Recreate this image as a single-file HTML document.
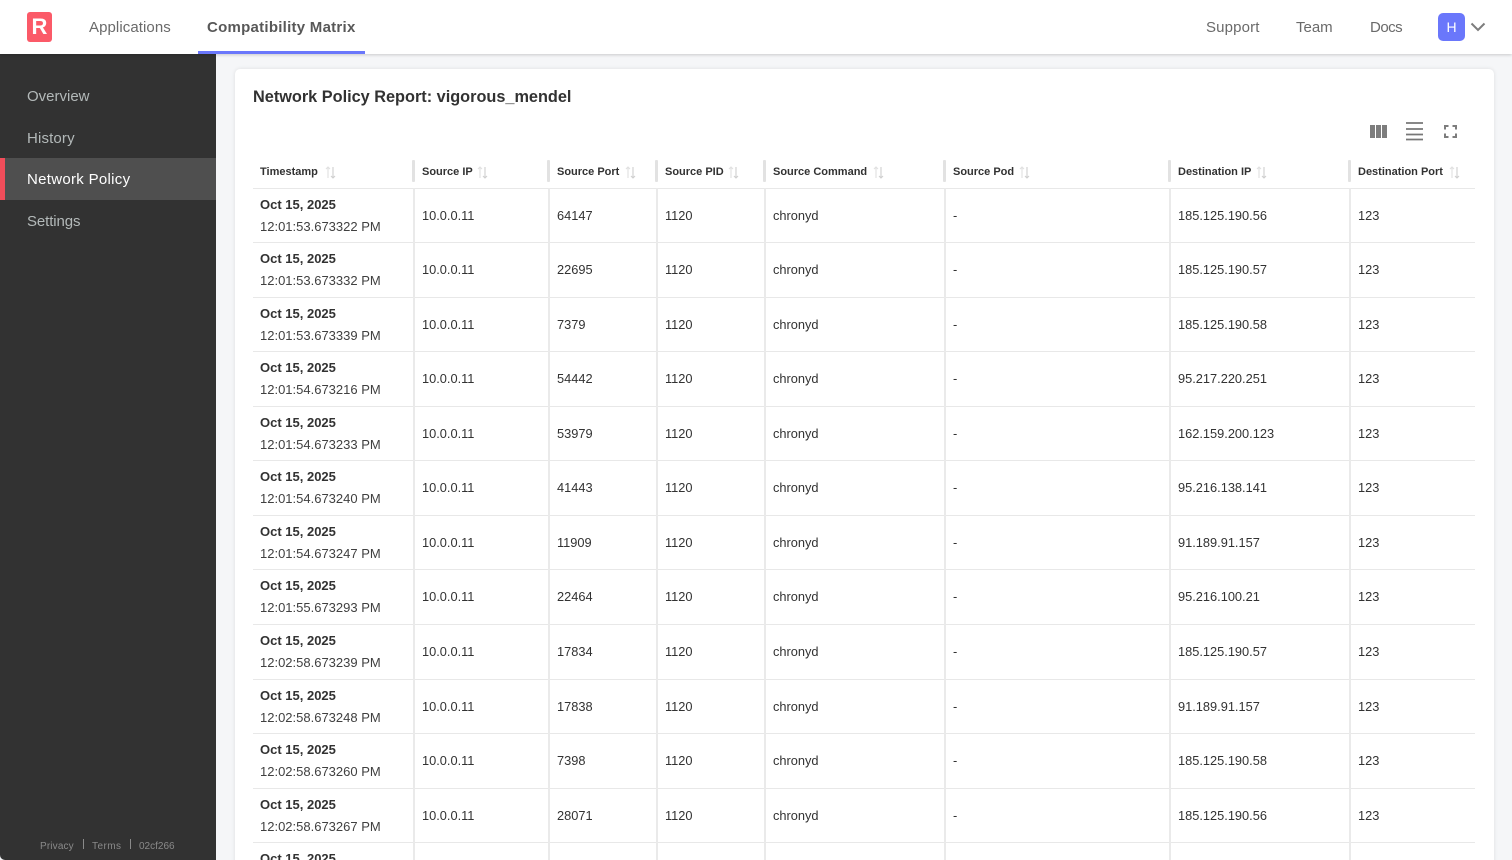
<!DOCTYPE html>
<html><head><meta charset="utf-8"><style>
*{box-sizing:border-box}
html,body{margin:0;width:1512px;height:860px;overflow:hidden;background:#f5f6f8;font-family:"Liberation Sans",sans-serif;color:#323232}
#wrap{position:relative;width:1512px;height:860px;overflow:hidden}
.a{position:absolute;white-space:nowrap}
#top{position:absolute;left:0;top:0;width:1512px;height:54px;background:#fff;box-shadow:0 1px 3px rgba(0,0,0,.18);z-index:3}
.nav{font-size:15px;color:#6a6a6a;top:19px;line-height:18px}
#side{position:absolute;left:0;top:54px;width:216px;height:806px;background:#323232;border-bottom-left-radius:5px;z-index:2}
.si{position:absolute;left:27px;font-size:15px;color:#b3b9b9;line-height:18px}
#card{position:absolute;left:235px;top:69px;width:1259px;height:800px;background:#fff;border-radius:5px;box-shadow:0 0 4px rgba(0,0,0,.1)}
.hd{position:absolute;top:163px;font-size:11px;font-weight:bold;color:#323232;line-height:18px;white-space:nowrap}
.sep{position:absolute;top:160px;width:3px;height:22px;background:#e2e2e2;border-radius:1px}
.sort{position:absolute;top:166px;width:11px;height:13px}
#rows{position:absolute;left:253px;top:187.6px;width:1222px;height:672.4px;overflow:hidden;border-top:1px solid #e8e8e8}
.r{position:relative;height:54.55px;border-bottom:1px solid #e8e8e8}
.r span{position:absolute;top:19px;font-size:12.8px;line-height:16px;color:#323232;white-space:nowrap}
.r .d{left:7px;top:8px;font-size:13px;font-weight:bold}
.r .t{left:7px;top:30px;font-size:13px;color:#404040}
.r .c2{left:169px}.r .c3{left:304px}.r .c4{left:412px}.r .c5{left:520px}.r .c6{left:700px}.r .c7{left:925px}.r .c8{left:1105px}
.l{position:absolute;top:188px;width:2px;height:672px;background:#eaeaea}
</style></head><body><div id="wrap">
<svg width="0" height="0" style="position:absolute"><symbol id="s" viewBox="0 0 11 13"><path d="M3 12V1M1 3 3 1l2 2" fill="none" stroke="#e0e0e0" stroke-width="1.100"/><path d="M8 1v11M6 10l2 2 2-2" fill="none" stroke="#cfcfcf" stroke-width="1.100"/></symbol></svg>
<div id="top">
<div class="a" style="left:27px;top:12px;width:25px;height:30px;background:#fb5a68;border-radius:3px"></div>
<div class="a" style="left:27px;top:12px;width:25px;height:30px;color:#fff;font-weight:bold;font-size:22px;line-height:30px;text-align:center">R</div>
<div class="a nav" style="left:89px;letter-spacing:.08px">Applications</div>
<div class="a nav" style="left:207px;font-weight:bold;font-size:15px;letter-spacing:.26px;color:#585858">Compatibility Matrix</div>
<div class="a" style="left:198px;top:51px;width:167px;height:3px;background:#6a77fb"></div>
<div class="a nav" style="left:1206px;letter-spacing:.15px">Support</div>
<div class="a nav" style="left:1296px">Team</div>
<div class="a nav" style="left:1370px;letter-spacing:-.5px">Docs</div>
<div class="a" style="left:1438px;top:13px;width:27px;height:28px;background:#6a77fb;border-radius:5px;color:#fff;font-size:14px;line-height:28px;text-align:center">H</div>
<svg class="a" style="left:1470px;top:22px" width="16" height="10" viewBox="0 0 16 10"><path d="M1.500 1.500 8 8l6.500-6.500" fill="none" stroke="#7d7d7d" stroke-width="2"/></svg>
</div>
<div id="side">
<div class="si" style="top:34px">Overview</div>
<div class="si" style="top:76px;letter-spacing:.15px">History</div>
<div class="a" style="left:0;top:104px;width:216px;height:42px;background:#4f4f4f;border-left:5px solid #f14d5a"></div>
<div class="si" style="top:117px;color:#fff;letter-spacing:.3px">Network Policy</div>
<div class="si" style="top:159px;letter-spacing:-.1px">Settings</div>
<div class="a" style="left:40px;top:786px;font-size:10px;letter-spacing:.15px;line-height:14px;color:#8a8a8a">Privacy</div>
<div class="a" style="left:83px;top:785px;width:1px;height:10px;background:#8a8a8a"></div>
<div class="a" style="left:92px;top:786px;font-size:10px;letter-spacing:.45px;line-height:14px;color:#8a8a8a">Terms</div>
<div class="a" style="left:130px;top:785px;width:1px;height:10px;background:#8a8a8a"></div>
<div class="a" style="left:139px;top:786px;font-size:10px;line-height:14px;color:#8a8a8a">02cf266</div>
</div>
<div id="card"></div>
<div class="a" style="left:253px;top:87px;font-size:16.300px;font-weight:bold;line-height:20px;color:#323232">Network Policy Report: vigorous_mendel</div>
<svg class="a" style="left:1370px;top:125px" width="17" height="13" viewBox="0 0 17 13"><path d="M0 0h5v13H0zM6 0h5v13H6zM12 0h5v13h-5z" fill="#7d7d7d"/></svg>
<svg class="a" style="left:1406px;top:122px" width="17" height="19" viewBox="0 0 17 19"><path d="M0 1h17M0 7h17M0 12.500h17M0 17.500h17" stroke="#777" stroke-width="1.800" fill="none"/></svg>
<svg class="a" style="left:1444px;top:125px" width="13" height="13" viewBox="0 0 13 13"><path d="M1 4.500V1h3.500M8.500 1H12v3.500M12 8.500V12H8.500M4.500 12H1V8.500" stroke="#7d7d7d" stroke-width="2" fill="none"/></svg>

<div class="hd" style="left:260px">Timestamp</div><svg class="sort" style="left:325px"><use href="#s"/></svg>
<div class="sep" style="left:412px"></div>
<div class="hd" style="left:422px">Source IP</div><svg class="sort" style="left:477px"><use href="#s"/></svg>
<div class="sep" style="left:547px"></div>
<div class="hd" style="left:557px">Source Port</div><svg class="sort" style="left:625px"><use href="#s"/></svg>
<div class="sep" style="left:655px"></div>
<div class="hd" style="left:665px">Source PID</div><svg class="sort" style="left:728px"><use href="#s"/></svg>
<div class="sep" style="left:763px"></div>
<div class="hd" style="left:773px">Source Command</div><svg class="sort" style="left:873px"><use href="#s"/></svg>
<div class="sep" style="left:943px"></div>
<div class="hd" style="left:953px">Source Pod</div><svg class="sort" style="left:1019px"><use href="#s"/></svg>
<div class="sep" style="left:1168px"></div>
<div class="hd" style="left:1178px">Destination IP</div><svg class="sort" style="left:1256px"><use href="#s"/></svg>
<div class="sep" style="left:1348px"></div>
<div class="hd" style="left:1358px">Destination Port</div><svg class="sort" style="left:1449px"><use href="#s"/></svg>

<div id="rows">
<div class="r"><span class="d">Oct 15, 2025</span><span class="t">12:01:53.673322 PM</span><span class="c2">10.0.0.11</span><span class="c3">64147</span><span class="c4">1120</span><span class="c5">chronyd</span><span class="c6">-</span><span class="c7">185.125.190.56</span><span class="c8">123</span></div>
<div class="r"><span class="d">Oct 15, 2025</span><span class="t">12:01:53.673332 PM</span><span class="c2">10.0.0.11</span><span class="c3">22695</span><span class="c4">1120</span><span class="c5">chronyd</span><span class="c6">-</span><span class="c7">185.125.190.57</span><span class="c8">123</span></div>
<div class="r"><span class="d">Oct 15, 2025</span><span class="t">12:01:53.673339 PM</span><span class="c2">10.0.0.11</span><span class="c3">7379</span><span class="c4">1120</span><span class="c5">chronyd</span><span class="c6">-</span><span class="c7">185.125.190.58</span><span class="c8">123</span></div>
<div class="r"><span class="d">Oct 15, 2025</span><span class="t">12:01:54.673216 PM</span><span class="c2">10.0.0.11</span><span class="c3">54442</span><span class="c4">1120</span><span class="c5">chronyd</span><span class="c6">-</span><span class="c7">95.217.220.251</span><span class="c8">123</span></div>
<div class="r"><span class="d">Oct 15, 2025</span><span class="t">12:01:54.673233 PM</span><span class="c2">10.0.0.11</span><span class="c3">53979</span><span class="c4">1120</span><span class="c5">chronyd</span><span class="c6">-</span><span class="c7">162.159.200.123</span><span class="c8">123</span></div>
<div class="r"><span class="d">Oct 15, 2025</span><span class="t">12:01:54.673240 PM</span><span class="c2">10.0.0.11</span><span class="c3">41443</span><span class="c4">1120</span><span class="c5">chronyd</span><span class="c6">-</span><span class="c7">95.216.138.141</span><span class="c8">123</span></div>
<div class="r"><span class="d">Oct 15, 2025</span><span class="t">12:01:54.673247 PM</span><span class="c2">10.0.0.11</span><span class="c3">11909</span><span class="c4">1120</span><span class="c5">chronyd</span><span class="c6">-</span><span class="c7">91.189.91.157</span><span class="c8">123</span></div>
<div class="r"><span class="d">Oct 15, 2025</span><span class="t">12:01:55.673293 PM</span><span class="c2">10.0.0.11</span><span class="c3">22464</span><span class="c4">1120</span><span class="c5">chronyd</span><span class="c6">-</span><span class="c7">95.216.100.21</span><span class="c8">123</span></div>
<div class="r"><span class="d">Oct 15, 2025</span><span class="t">12:02:58.673239 PM</span><span class="c2">10.0.0.11</span><span class="c3">17834</span><span class="c4">1120</span><span class="c5">chronyd</span><span class="c6">-</span><span class="c7">185.125.190.57</span><span class="c8">123</span></div>
<div class="r"><span class="d">Oct 15, 2025</span><span class="t">12:02:58.673248 PM</span><span class="c2">10.0.0.11</span><span class="c3">17838</span><span class="c4">1120</span><span class="c5">chronyd</span><span class="c6">-</span><span class="c7">91.189.91.157</span><span class="c8">123</span></div>
<div class="r"><span class="d">Oct 15, 2025</span><span class="t">12:02:58.673260 PM</span><span class="c2">10.0.0.11</span><span class="c3">7398</span><span class="c4">1120</span><span class="c5">chronyd</span><span class="c6">-</span><span class="c7">185.125.190.58</span><span class="c8">123</span></div>
<div class="r"><span class="d">Oct 15, 2025</span><span class="t">12:02:58.673267 PM</span><span class="c2">10.0.0.11</span><span class="c3">28071</span><span class="c4">1120</span><span class="c5">chronyd</span><span class="c6">-</span><span class="c7">185.125.190.56</span><span class="c8">123</span></div>
<div class="r"><span class="d">Oct 15, 2025</span></div>
</div>
<div class="l" style="left:413px"></div><div class="l" style="left:548px"></div><div class="l" style="left:656px"></div><div class="l" style="left:764px"></div><div class="l" style="left:944px"></div><div class="l" style="left:1169px"></div><div class="l" style="left:1349px"></div>
</div></body></html>
